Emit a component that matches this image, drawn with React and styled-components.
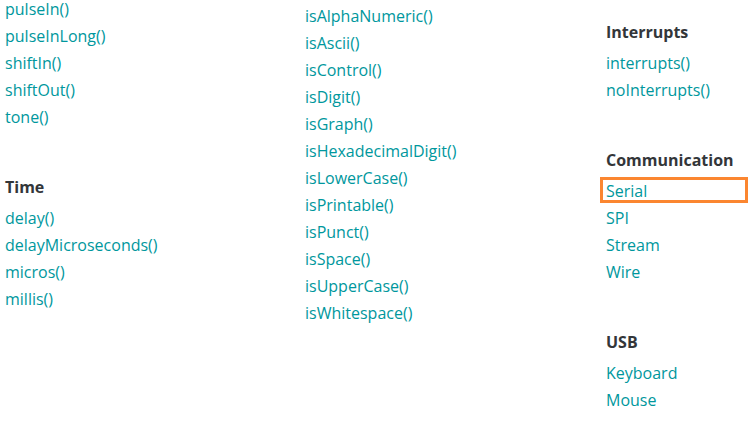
import React from "react";
import styled, { createGlobalStyle } from "styled-components";

const GlobalStyle = createGlobalStyle`
  html, body {
    margin: 0;
    padding: 0;
    background: #ffffff;
  }
  body {
    font-family: "Open Sans", "Noto Sans", sans-serif;
    overflow: hidden;
  }
`;

const Page = styled.div`
  width: 755px;
  height: 425px;
  overflow: hidden;
  display: grid;
  grid-template-columns: 300px 301px 1fr;
  padding-left: 5px;
  box-sizing: border-box;
  align-items: start;
`;

const Column = styled.div`
  display: flex;
  flex-direction: column;
  margin-top: ${(props) => props.offset}px;
`;

const Section = styled.section`
  display: flex;
  flex-direction: column;
  margin-bottom: 43px;
`;

const Heading = styled.h3`
  margin: 0 0 4px;
  font-size: 16px;
  font-weight: 700;
  line-height: 27px;
  color: #333639;
`;

const List = styled.ul`
  list-style: none;
  margin: 0;
  padding: 0;
`;

const Item = styled.li`
  position: relative;
  font-size: 16px;
  line-height: 27px;
  height: 27px;

  ${(props) =>
    props.highlighted &&
    `
    &::after {
      content: "";
      position: absolute;
      left: -6px;
      top: -1px;
      width: 148px;
      height: 26px;
      border: 3px solid #fb8630;
      box-sizing: border-box;
      pointer-events: none;
    }
  `}
`;

const Link = styled.a`
  color: #00979d;
  text-decoration: none;
`;

const columns = [
  {
    offset: -4,
    sections: [
      {
        items: ["pulseIn()", "pulseInLong()", "shiftIn()", "shiftOut()", "tone()"],
      },
      {
        title: "Time",
        items: ["delay()", "delayMicroseconds()", "micros()", "millis()"],
      },
    ],
  },
  {
    offset: 3,
    sections: [
      {
        items: [
          "isAlphaNumeric()",
          "isAscii()",
          "isControl()",
          "isDigit()",
          "isGraph()",
          "isHexadecimalDigit()",
          "isLowerCase()",
          "isPrintable()",
          "isPunct()",
          "isSpace()",
          "isUpperCase()",
          "isWhitespace()",
        ],
      },
    ],
  },
  {
    offset: 19,
    sections: [
      { title: "Interrupts", items: ["interrupts()", "noInterrupts()"] },
      {
        title: "Communication",
        items: ["Serial", "SPI", "Stream", "Wire"],
        highlight: "Serial",
      },
      { title: "USB", items: ["Keyboard", "Mouse"] },
    ],
  },
];

const App = () => (
  <>
    <GlobalStyle />
    <Page>
      {columns.map((col, i) => (
        <Column key={i} offset={col.offset}>
          {col.sections.map((sec, j) => (
            <Section key={j}>
              {sec.title && <Heading>{sec.title}</Heading>}
              <List>
                {sec.items.map((name) => (
                  <Item key={name} highlighted={sec.highlight === name}>
                    <Link href="#">{name}</Link>
                  </Item>
                ))}
              </List>
            </Section>
          ))}
        </Column>
      ))}
    </Page>
  </>
);

export default App;
